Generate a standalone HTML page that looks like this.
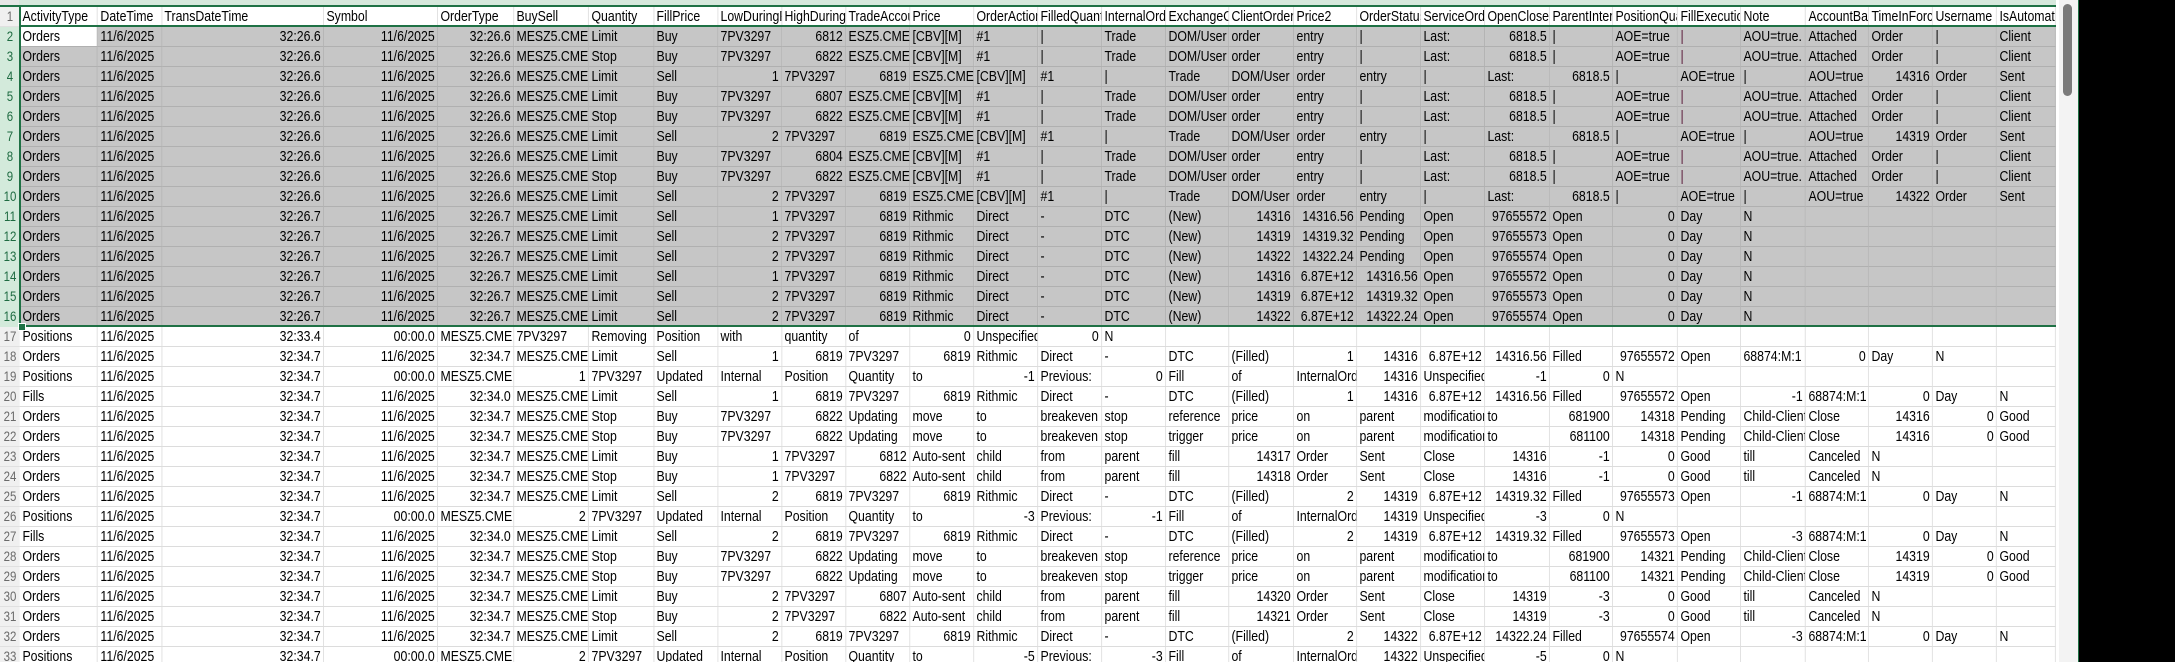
<!DOCTYPE html>
<html><head><meta charset="utf-8">
<style>
html,body{margin:0;padding:0;background:#000;}
#wrap{position:absolute;left:0;top:0;width:2079px;height:662px;background:#fff;overflow:hidden;}
#top{position:absolute;left:0;top:0;width:2056px;height:6px;background:#d6e8dc;}
#corner{position:absolute;left:0;top:0;width:19px;height:6px;background:#e6e6e6;}
table{position:absolute;left:0;top:7px;border-collapse:separate;border-spacing:0;table-layout:fixed;width:2507.3px;
 transform:scaleX(0.82);transform-origin:0 0;
 font-family:"Liberation Sans",sans-serif;font-size:15px;color:#000;}
td{height:20px;box-sizing:border-box;padding:0 3px;border-right:1px solid #dcdcdc;border-bottom:1px solid #dcdcdc;overflow:hidden;white-space:nowrap;text-align:left;line-height:19px;}
td.r{text-align:right;}
td.h{background:#f0f0f0;color:#6a6a6a;text-align:center;padding:0;font-size:14px;border-right:none;border-bottom:1px solid #e0e0e0;}
tr.s td{background:#c6c6c6;border-color:#b0b0b0;}
tr.s td.h{background:#d3eadb;color:#1e6b41;border-color:#d3eadb;}
tr.s td.w{background:#fff;}
td.p{color:#5a1a3a;}
.g{position:absolute;background:#1f7145;}
#sb{position:absolute;left:2056px;top:0;width:22px;height:662px;background:#f3f3f3;border-left:3px solid #fff;box-sizing:border-box;}
#th{position:absolute;left:2063px;top:4px;width:9px;height:92px;background:#7b7b7b;border-radius:5px;}
#gl{position:absolute;left:2078px;top:0;width:1px;height:662px;background:#1f7145;}
</style></head><body>
<div id="wrap">
<div id="top"></div><div id="corner"></div>
<table>
<colgroup><col style="width:24.4px"><col style="width:95.1px"><col style="width:78.05px"><col style="width:197.6px"><col style="width:139px"><col style="width:92.7px"><col style="width:91.5px"><col style="width:79.3px"><col style="width:78.05px">
<col style="width:78.05px"><col style="width:78.05px"><col style="width:78.05px"><col style="width:78.05px"><col style="width:78.05px"><col style="width:78.05px"><col style="width:78.05px"><col style="width:76.8px"><col style="width:79.3px"><col style="width:76.8px"><col style="width:78.05px"><col style="width:78.05px"><col style="width:79.3px"><col style="width:76.8px"><col style="width:79.3px"><col style="width:76.8px"><col style="width:79.3px"><col style="width:76.8px"><col style="width:78.05px"><col style="width:78.05px"><col style="width:72px"></colgroup>
<tr><td class="h">1</td><td>ActivityType</td><td>DateTime</td><td>TransDateTime</td><td>Symbol</td><td>OrderType</td><td>BuySell</td><td>Quantity</td><td>FillPrice</td><td>LowDuringPosition</td><td>HighDuringPosition</td><td>TradeAccount</td><td>Price</td><td>OrderActionSource</td><td>FilledQuantity</td><td>InternalOrderID</td><td>ExchangeOrderID</td><td>ClientOrderID</td><td>Price2</td><td>OrderStatus</td><td>ServiceOrderID</td><td>OpenClose</td><td>ParentInternalOrderID</td><td>PositionQuantity</td><td>FillExecutionServiceID</td><td>Note</td><td>AccountBalance</td><td>TimeInForce</td><td>Username</td><td>IsAutomated</td></tr>

<tr class="s"><td class="h">2</td><td class="w">Orders</td><td>11/6/2025</td><td class="r">32:26.6</td><td class="r">11/6/2025</td><td class="r">32:26.6</td><td>MESZ5.CME</td><td>Limit</td><td>Buy</td><td>7PV3297</td><td class="r">6812</td><td>ESZ5.CME/CBV</td><td>[CBV][M]</td><td>#1</td><td>|</td><td>Trade</td><td>DOM/User</td><td>order</td><td>entry</td><td>|</td><td>Last:</td><td class="r">6818.5</td><td>|</td><td>AOE=true</td><td class="p">|</td><td>AOU=true.</td><td>Attached</td><td>Order</td><td>|</td><td>Client</td></tr>
<tr class="s"><td class="h">3</td><td>Orders</td><td>11/6/2025</td><td class="r">32:26.6</td><td class="r">11/6/2025</td><td class="r">32:26.6</td><td>MESZ5.CME</td><td>Stop</td><td>Buy</td><td>7PV3297</td><td class="r">6822</td><td>ESZ5.CME/CBV</td><td>[CBV][M]</td><td>#1</td><td>|</td><td>Trade</td><td>DOM/User</td><td>order</td><td>entry</td><td>|</td><td>Last:</td><td class="r">6818.5</td><td>|</td><td>AOE=true</td><td class="p">|</td><td>AOU=true.</td><td>Attached</td><td>Order</td><td>|</td><td>Client</td></tr>
<tr class="s"><td class="h">4</td><td>Orders</td><td>11/6/2025</td><td class="r">32:26.6</td><td class="r">11/6/2025</td><td class="r">32:26.6</td><td>MESZ5.CME</td><td>Limit</td><td>Sell</td><td class="r">1</td><td>7PV3297</td><td class="r">6819</td><td>ESZ5.CME/CBV</td><td>[CBV][M]</td><td>#1</td><td>|</td><td>Trade</td><td>DOM/User</td><td>order</td><td>entry</td><td>|</td><td>Last:</td><td class="r">6818.5</td><td>|</td><td>AOE=true</td><td>|</td><td>AOU=true</td><td class="r">14316</td><td>Order</td><td>Sent</td></tr>
<tr class="s"><td class="h">5</td><td>Orders</td><td>11/6/2025</td><td class="r">32:26.6</td><td class="r">11/6/2025</td><td class="r">32:26.6</td><td>MESZ5.CME</td><td>Limit</td><td>Buy</td><td>7PV3297</td><td class="r">6807</td><td>ESZ5.CME/CBV</td><td>[CBV][M]</td><td>#1</td><td>|</td><td>Trade</td><td>DOM/User</td><td>order</td><td>entry</td><td>|</td><td>Last:</td><td class="r">6818.5</td><td>|</td><td>AOE=true</td><td class="p">|</td><td>AOU=true.</td><td>Attached</td><td>Order</td><td>|</td><td>Client</td></tr>
<tr class="s"><td class="h">6</td><td>Orders</td><td>11/6/2025</td><td class="r">32:26.6</td><td class="r">11/6/2025</td><td class="r">32:26.6</td><td>MESZ5.CME</td><td>Stop</td><td>Buy</td><td>7PV3297</td><td class="r">6822</td><td>ESZ5.CME/CBV</td><td>[CBV][M]</td><td>#1</td><td>|</td><td>Trade</td><td>DOM/User</td><td>order</td><td>entry</td><td>|</td><td>Last:</td><td class="r">6818.5</td><td>|</td><td>AOE=true</td><td class="p">|</td><td>AOU=true.</td><td>Attached</td><td>Order</td><td>|</td><td>Client</td></tr>
<tr class="s"><td class="h">7</td><td>Orders</td><td>11/6/2025</td><td class="r">32:26.6</td><td class="r">11/6/2025</td><td class="r">32:26.6</td><td>MESZ5.CME</td><td>Limit</td><td>Sell</td><td class="r">2</td><td>7PV3297</td><td class="r">6819</td><td>ESZ5.CME/CBV</td><td>[CBV][M]</td><td>#1</td><td>|</td><td>Trade</td><td>DOM/User</td><td>order</td><td>entry</td><td>|</td><td>Last:</td><td class="r">6818.5</td><td>|</td><td>AOE=true</td><td>|</td><td>AOU=true</td><td class="r">14319</td><td>Order</td><td>Sent</td></tr>
<tr class="s"><td class="h">8</td><td>Orders</td><td>11/6/2025</td><td class="r">32:26.6</td><td class="r">11/6/2025</td><td class="r">32:26.6</td><td>MESZ5.CME</td><td>Limit</td><td>Buy</td><td>7PV3297</td><td class="r">6804</td><td>ESZ5.CME/CBV</td><td>[CBV][M]</td><td>#1</td><td>|</td><td>Trade</td><td>DOM/User</td><td>order</td><td>entry</td><td>|</td><td>Last:</td><td class="r">6818.5</td><td>|</td><td>AOE=true</td><td class="p">|</td><td>AOU=true.</td><td>Attached</td><td>Order</td><td>|</td><td>Client</td></tr>
<tr class="s"><td class="h">9</td><td>Orders</td><td>11/6/2025</td><td class="r">32:26.6</td><td class="r">11/6/2025</td><td class="r">32:26.6</td><td>MESZ5.CME</td><td>Stop</td><td>Buy</td><td>7PV3297</td><td class="r">6822</td><td>ESZ5.CME/CBV</td><td>[CBV][M]</td><td>#1</td><td>|</td><td>Trade</td><td>DOM/User</td><td>order</td><td>entry</td><td>|</td><td>Last:</td><td class="r">6818.5</td><td>|</td><td>AOE=true</td><td class="p">|</td><td>AOU=true.</td><td>Attached</td><td>Order</td><td>|</td><td>Client</td></tr>
<tr class="s"><td class="h">10</td><td>Orders</td><td>11/6/2025</td><td class="r">32:26.6</td><td class="r">11/6/2025</td><td class="r">32:26.6</td><td>MESZ5.CME</td><td>Limit</td><td>Sell</td><td class="r">2</td><td>7PV3297</td><td class="r">6819</td><td>ESZ5.CME/CBV</td><td>[CBV][M]</td><td>#1</td><td>|</td><td>Trade</td><td>DOM/User</td><td>order</td><td>entry</td><td>|</td><td>Last:</td><td class="r">6818.5</td><td>|</td><td>AOE=true</td><td>|</td><td>AOU=true</td><td class="r">14322</td><td>Order</td><td>Sent</td></tr>
<tr class="s"><td class="h">11</td><td>Orders</td><td>11/6/2025</td><td class="r">32:26.7</td><td class="r">11/6/2025</td><td class="r">32:26.7</td><td>MESZ5.CME</td><td>Limit</td><td>Sell</td><td class="r">1</td><td>7PV3297</td><td class="r">6819</td><td>Rithmic</td><td>Direct</td><td>-</td><td>DTC</td><td>(New)</td><td class="r">14316</td><td class="r">14316.56</td><td>Pending</td><td>Open</td><td class="r">97655572</td><td>Open</td><td class="r">0</td><td>Day</td><td>N</td><td></td><td></td><td></td><td></td></tr>
<tr class="s"><td class="h">12</td><td>Orders</td><td>11/6/2025</td><td class="r">32:26.7</td><td class="r">11/6/2025</td><td class="r">32:26.7</td><td>MESZ5.CME</td><td>Limit</td><td>Sell</td><td class="r">2</td><td>7PV3297</td><td class="r">6819</td><td>Rithmic</td><td>Direct</td><td>-</td><td>DTC</td><td>(New)</td><td class="r">14319</td><td class="r">14319.32</td><td>Pending</td><td>Open</td><td class="r">97655573</td><td>Open</td><td class="r">0</td><td>Day</td><td>N</td><td></td><td></td><td></td><td></td></tr>
<tr class="s"><td class="h">13</td><td>Orders</td><td>11/6/2025</td><td class="r">32:26.7</td><td class="r">11/6/2025</td><td class="r">32:26.7</td><td>MESZ5.CME</td><td>Limit</td><td>Sell</td><td class="r">2</td><td>7PV3297</td><td class="r">6819</td><td>Rithmic</td><td>Direct</td><td>-</td><td>DTC</td><td>(New)</td><td class="r">14322</td><td class="r">14322.24</td><td>Pending</td><td>Open</td><td class="r">97655574</td><td>Open</td><td class="r">0</td><td>Day</td><td>N</td><td></td><td></td><td></td><td></td></tr>
<tr class="s"><td class="h">14</td><td>Orders</td><td>11/6/2025</td><td class="r">32:26.7</td><td class="r">11/6/2025</td><td class="r">32:26.7</td><td>MESZ5.CME</td><td>Limit</td><td>Sell</td><td class="r">1</td><td>7PV3297</td><td class="r">6819</td><td>Rithmic</td><td>Direct</td><td>-</td><td>DTC</td><td>(New)</td><td class="r">14316</td><td class="r">6.87E+12</td><td class="r">14316.56</td><td>Open</td><td class="r">97655572</td><td>Open</td><td class="r">0</td><td>Day</td><td>N</td><td></td><td></td><td></td><td></td></tr>
<tr class="s"><td class="h">15</td><td>Orders</td><td>11/6/2025</td><td class="r">32:26.7</td><td class="r">11/6/2025</td><td class="r">32:26.7</td><td>MESZ5.CME</td><td>Limit</td><td>Sell</td><td class="r">2</td><td>7PV3297</td><td class="r">6819</td><td>Rithmic</td><td>Direct</td><td>-</td><td>DTC</td><td>(New)</td><td class="r">14319</td><td class="r">6.87E+12</td><td class="r">14319.32</td><td>Open</td><td class="r">97655573</td><td>Open</td><td class="r">0</td><td>Day</td><td>N</td><td></td><td></td><td></td><td></td></tr>
<tr class="s"><td class="h">16</td><td>Orders</td><td>11/6/2025</td><td class="r">32:26.7</td><td class="r">11/6/2025</td><td class="r">32:26.7</td><td>MESZ5.CME</td><td>Limit</td><td>Sell</td><td class="r">2</td><td>7PV3297</td><td class="r">6819</td><td>Rithmic</td><td>Direct</td><td>-</td><td>DTC</td><td>(New)</td><td class="r">14322</td><td class="r">6.87E+12</td><td class="r">14322.24</td><td>Open</td><td class="r">97655574</td><td>Open</td><td class="r">0</td><td>Day</td><td>N</td><td></td><td></td><td></td><td></td></tr>

<tr><td class="h">17</td><td>Positions</td><td>11/6/2025</td><td class="r">32:33.4</td><td class="r">00:00.0</td><td>MESZ5.CME</td><td>7PV3297</td><td>Removing</td><td>Position</td><td>with</td><td>quantity</td><td>of</td><td class="r">0</td><td>Unspecified</td><td class="r">0</td><td>N</td><td></td><td></td><td></td><td></td><td></td><td></td><td></td><td></td><td></td><td></td><td></td><td></td><td></td><td></td></tr>
<tr><td class="h">18</td><td>Orders</td><td>11/6/2025</td><td class="r">32:34.7</td><td class="r">11/6/2025</td><td class="r">32:34.7</td><td>MESZ5.CME</td><td>Limit</td><td>Sell</td><td class="r">1</td><td class="r">6819</td><td>7PV3297</td><td class="r">6819</td><td>Rithmic</td><td>Direct</td><td>-</td><td>DTC</td><td>(Filled)</td><td class="r">1</td><td class="r">14316</td><td class="r">6.87E+12</td><td class="r">14316.56</td><td>Filled</td><td class="r">97655572</td><td>Open</td><td>68874:M:1</td><td class="r">0</td><td>Day</td><td>N</td><td></td></tr>
<tr><td class="h">19</td><td>Positions</td><td>11/6/2025</td><td class="r">32:34.7</td><td class="r">00:00.0</td><td>MESZ5.CME</td><td class="r">1</td><td>7PV3297</td><td>Updated</td><td>Internal</td><td>Position</td><td>Quantity</td><td>to</td><td class="r">-1</td><td>Previous:</td><td class="r">0</td><td>Fill</td><td>of</td><td>InternalOrder</td><td class="r">14316</td><td>Unspecified</td><td class="r">-1</td><td class="r">0</td><td>N</td><td></td><td></td><td></td><td></td><td></td><td></td></tr>
<tr><td class="h">20</td><td>Fills</td><td>11/6/2025</td><td class="r">32:34.7</td><td class="r">11/6/2025</td><td class="r">32:34.0</td><td>MESZ5.CME</td><td>Limit</td><td>Sell</td><td class="r">1</td><td class="r">6819</td><td>7PV3297</td><td class="r">6819</td><td>Rithmic</td><td>Direct</td><td>-</td><td>DTC</td><td>(Filled)</td><td class="r">1</td><td class="r">14316</td><td class="r">6.87E+12</td><td class="r">14316.56</td><td>Filled</td><td class="r">97655572</td><td>Open</td><td class="r">-1</td><td>68874:M:1</td><td class="r">0</td><td>Day</td><td>N</td></tr>
<tr><td class="h">21</td><td>Orders</td><td>11/6/2025</td><td class="r">32:34.7</td><td class="r">11/6/2025</td><td class="r">32:34.7</td><td>MESZ5.CME</td><td>Stop</td><td>Buy</td><td>7PV3297</td><td class="r">6822</td><td>Updating</td><td>move</td><td>to</td><td>breakeven</td><td>stop</td><td>reference</td><td>price</td><td>on</td><td>parent</td><td>modification</td><td>to</td><td class="r">681900</td><td class="r">14318</td><td>Pending</td><td>Child-Client</td><td>Close</td><td class="r">14316</td><td class="r">0</td><td>Good</td></tr>
<tr><td class="h">22</td><td>Orders</td><td>11/6/2025</td><td class="r">32:34.7</td><td class="r">11/6/2025</td><td class="r">32:34.7</td><td>MESZ5.CME</td><td>Stop</td><td>Buy</td><td>7PV3297</td><td class="r">6822</td><td>Updating</td><td>move</td><td>to</td><td>breakeven</td><td>stop</td><td>trigger</td><td>price</td><td>on</td><td>parent</td><td>modification</td><td>to</td><td class="r">681100</td><td class="r">14318</td><td>Pending</td><td>Child-Client</td><td>Close</td><td class="r">14316</td><td class="r">0</td><td>Good</td></tr>
<tr><td class="h">23</td><td>Orders</td><td>11/6/2025</td><td class="r">32:34.7</td><td class="r">11/6/2025</td><td class="r">32:34.7</td><td>MESZ5.CME</td><td>Limit</td><td>Buy</td><td class="r">1</td><td>7PV3297</td><td class="r">6812</td><td>Auto-sent</td><td>child</td><td>from</td><td>parent</td><td>fill</td><td class="r">14317</td><td>Order</td><td>Sent</td><td>Close</td><td class="r">14316</td><td class="r">-1</td><td class="r">0</td><td>Good</td><td>till</td><td>Canceled</td><td>N</td><td></td><td></td></tr>
<tr><td class="h">24</td><td>Orders</td><td>11/6/2025</td><td class="r">32:34.7</td><td class="r">11/6/2025</td><td class="r">32:34.7</td><td>MESZ5.CME</td><td>Stop</td><td>Buy</td><td class="r">1</td><td>7PV3297</td><td class="r">6822</td><td>Auto-sent</td><td>child</td><td>from</td><td>parent</td><td>fill</td><td class="r">14318</td><td>Order</td><td>Sent</td><td>Close</td><td class="r">14316</td><td class="r">-1</td><td class="r">0</td><td>Good</td><td>till</td><td>Canceled</td><td>N</td><td></td><td></td></tr>
<tr><td class="h">25</td><td>Orders</td><td>11/6/2025</td><td class="r">32:34.7</td><td class="r">11/6/2025</td><td class="r">32:34.7</td><td>MESZ5.CME</td><td>Limit</td><td>Sell</td><td class="r">2</td><td class="r">6819</td><td>7PV3297</td><td class="r">6819</td><td>Rithmic</td><td>Direct</td><td>-</td><td>DTC</td><td>(Filled)</td><td class="r">2</td><td class="r">14319</td><td class="r">6.87E+12</td><td class="r">14319.32</td><td>Filled</td><td class="r">97655573</td><td>Open</td><td class="r">-1</td><td>68874:M:1</td><td class="r">0</td><td>Day</td><td>N</td></tr>
<tr><td class="h">26</td><td>Positions</td><td>11/6/2025</td><td class="r">32:34.7</td><td class="r">00:00.0</td><td>MESZ5.CME</td><td class="r">2</td><td>7PV3297</td><td>Updated</td><td>Internal</td><td>Position</td><td>Quantity</td><td>to</td><td class="r">-3</td><td>Previous:</td><td class="r">-1</td><td>Fill</td><td>of</td><td>InternalOrder</td><td class="r">14319</td><td>Unspecified</td><td class="r">-3</td><td class="r">0</td><td>N</td><td></td><td></td><td></td><td></td><td></td><td></td></tr>
<tr><td class="h">27</td><td>Fills</td><td>11/6/2025</td><td class="r">32:34.7</td><td class="r">11/6/2025</td><td class="r">32:34.0</td><td>MESZ5.CME</td><td>Limit</td><td>Sell</td><td class="r">2</td><td class="r">6819</td><td>7PV3297</td><td class="r">6819</td><td>Rithmic</td><td>Direct</td><td>-</td><td>DTC</td><td>(Filled)</td><td class="r">2</td><td class="r">14319</td><td class="r">6.87E+12</td><td class="r">14319.32</td><td>Filled</td><td class="r">97655573</td><td>Open</td><td class="r">-3</td><td>68874:M:1</td><td class="r">0</td><td>Day</td><td>N</td></tr>
<tr><td class="h">28</td><td>Orders</td><td>11/6/2025</td><td class="r">32:34.7</td><td class="r">11/6/2025</td><td class="r">32:34.7</td><td>MESZ5.CME</td><td>Stop</td><td>Buy</td><td>7PV3297</td><td class="r">6822</td><td>Updating</td><td>move</td><td>to</td><td>breakeven</td><td>stop</td><td>reference</td><td>price</td><td>on</td><td>parent</td><td>modification</td><td>to</td><td class="r">681900</td><td class="r">14321</td><td>Pending</td><td>Child-Client</td><td>Close</td><td class="r">14319</td><td class="r">0</td><td>Good</td></tr>
<tr><td class="h">29</td><td>Orders</td><td>11/6/2025</td><td class="r">32:34.7</td><td class="r">11/6/2025</td><td class="r">32:34.7</td><td>MESZ5.CME</td><td>Stop</td><td>Buy</td><td>7PV3297</td><td class="r">6822</td><td>Updating</td><td>move</td><td>to</td><td>breakeven</td><td>stop</td><td>trigger</td><td>price</td><td>on</td><td>parent</td><td>modification</td><td>to</td><td class="r">681100</td><td class="r">14321</td><td>Pending</td><td>Child-Client</td><td>Close</td><td class="r">14319</td><td class="r">0</td><td>Good</td></tr>
<tr><td class="h">30</td><td>Orders</td><td>11/6/2025</td><td class="r">32:34.7</td><td class="r">11/6/2025</td><td class="r">32:34.7</td><td>MESZ5.CME</td><td>Limit</td><td>Buy</td><td class="r">2</td><td>7PV3297</td><td class="r">6807</td><td>Auto-sent</td><td>child</td><td>from</td><td>parent</td><td>fill</td><td class="r">14320</td><td>Order</td><td>Sent</td><td>Close</td><td class="r">14319</td><td class="r">-3</td><td class="r">0</td><td>Good</td><td>till</td><td>Canceled</td><td>N</td><td></td><td></td></tr>
<tr><td class="h">31</td><td>Orders</td><td>11/6/2025</td><td class="r">32:34.7</td><td class="r">11/6/2025</td><td class="r">32:34.7</td><td>MESZ5.CME</td><td>Stop</td><td>Buy</td><td class="r">2</td><td>7PV3297</td><td class="r">6822</td><td>Auto-sent</td><td>child</td><td>from</td><td>parent</td><td>fill</td><td class="r">14321</td><td>Order</td><td>Sent</td><td>Close</td><td class="r">14319</td><td class="r">-3</td><td class="r">0</td><td>Good</td><td>till</td><td>Canceled</td><td>N</td><td></td><td></td></tr>
<tr><td class="h">32</td><td>Orders</td><td>11/6/2025</td><td class="r">32:34.7</td><td class="r">11/6/2025</td><td class="r">32:34.7</td><td>MESZ5.CME</td><td>Limit</td><td>Sell</td><td class="r">2</td><td class="r">6819</td><td>7PV3297</td><td class="r">6819</td><td>Rithmic</td><td>Direct</td><td>-</td><td>DTC</td><td>(Filled)</td><td class="r">2</td><td class="r">14322</td><td class="r">6.87E+12</td><td class="r">14322.24</td><td>Filled</td><td class="r">97655574</td><td>Open</td><td class="r">-3</td><td>68874:M:1</td><td class="r">0</td><td>Day</td><td>N</td></tr>
<tr><td class="h">33</td><td>Positions</td><td>11/6/2025</td><td class="r">32:34.7</td><td class="r">00:00.0</td><td>MESZ5.CME</td><td class="r">2</td><td>7PV3297</td><td>Updated</td><td>Internal</td><td>Position</td><td>Quantity</td><td>to</td><td class="r">-5</td><td>Previous:</td><td class="r">-3</td><td>Fill</td><td>of</td><td>InternalOrder</td><td class="r">14322</td><td>Unspecified</td><td class="r">-5</td><td class="r">0</td><td>N</td><td></td><td></td><td></td><td></td><td></td><td></td></tr>
</table>
<div class="g" style="left:0;top:5px;width:2056px;height:2px"></div>
<div class="g" style="left:19px;top:25px;width:2037px;height:2px"></div>
<div class="g" style="left:19px;top:325px;width:2037px;height:2px"></div>
<div class="g" style="left:19px;top:5px;width:2px;height:322px"></div>
<div class="g" style="left:18px;top:323px;width:6px;height:6px;border:1px solid #fff"></div>
<div id="sb"></div><div id="th"></div><div id="gl"></div>
</div>
</body></html>
